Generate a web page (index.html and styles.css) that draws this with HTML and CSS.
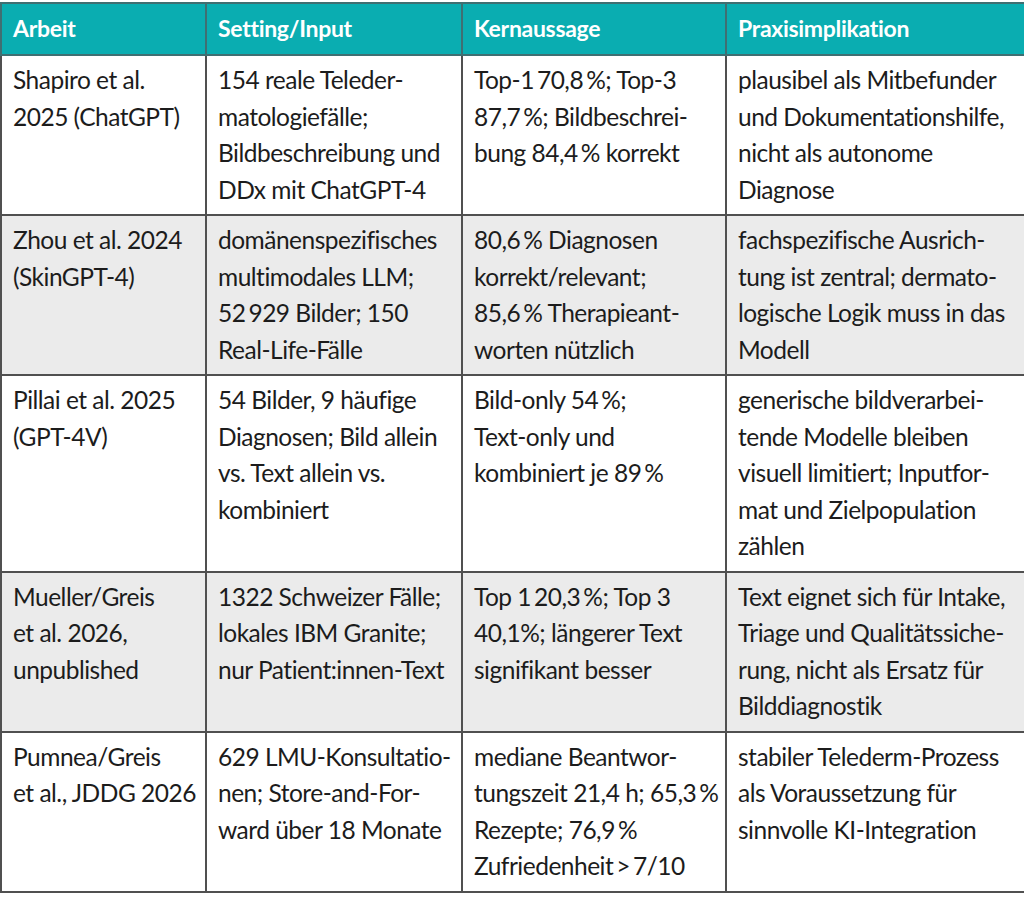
FILE: index.html
```html
<!DOCTYPE html>
<html lang="de">
<head>
<meta charset="utf-8">
<title>Studienübersicht</title>
<link rel="stylesheet" href="styles.css">
</head>
<body>
<table class="studies">
  <colgroup>
    <col class="c1"><col class="c2"><col class="c3"><col class="c4">
  </colgroup>
  <thead>
    <tr><th>Arbeit</th><th>Setting/Input</th><th>Kernaussage</th><th>Praxisimplikation</th></tr>
  </thead>
  <tbody>
    <tr>
      <td>Shapiro et al.<br>2025 (ChatGPT)</td>
      <td>154 reale Teleder-<br>matologiefälle;<br>Bildbeschreibung und<br>DDx mit ChatGPT-4</td>
      <td>Top-1<span class="ts"></span>70,8<span class="ts"></span>%; Top-3<br>87,7<span class="ts"></span>%; Bildbeschrei-<br>bung 84,4<span class="ts"></span>% korrekt</td>
      <td>plausibel als Mitbefunder<br>und Dokumentationshilfe,<br>nicht als autonome<br>Diagnose</td>
    </tr>
    <tr class="alt">
      <td>Zhou et al. 2024<br>(SkinGPT-4)</td>
      <td>domänenspezifisches<br>multimodales LLM;<br>52<span class="ts"></span>929 Bilder; 150<br>Real-Life-Fälle</td>
      <td>80,6<span class="ts"></span>% Diagnosen<br>korrekt/relevant;<br>85,6<span class="ts"></span>% Therapieant-<br>worten nützlich</td>
      <td>fachspezifische Ausrich-<br>tung ist zentral; dermato-<br>logische Logik muss in das<br>Modell</td>
    </tr>
    <tr>
      <td>Pillai et al. 2025<br>(GPT-4V)</td>
      <td>54 Bilder, 9 häufige<br>Diagnosen; Bild allein<br>vs. Text allein vs.<br>kombiniert</td>
      <td>Bild-only 54<span class="ts"></span>%;<br>Text-only und<br>kombiniert je 89<span class="ts"></span>%</td>
      <td>generische bildverarbei-<br>tende Modelle bleiben<br>visuell limitiert; Inputfor-<br>mat und Zielpopulation<br>zählen</td>
    </tr>
    <tr class="alt">
      <td>Mueller/Greis<br>et al. 2026,<br>unpublished</td>
      <td>1322 Schweizer Fälle;<br>lokales IBM Granite;<br>nur Patient:innen-Text</td>
      <td>Top 1<span class="ts"></span>20,3<span class="ts"></span>%; Top 3<br>40,1%; längerer Text<br>signifikant besser</td>
      <td>Text eignet sich für Intake,<br>Triage und Qualitätssiche-<br>rung, nicht als Ersatz für<br>Bilddiagnostik</td>
    </tr>
    <tr>
      <td>Pumnea/Greis<br>et al., JDDG 2026</td>
      <td>629 LMU-Konsultatio-<br>nen; Store-and-For-<br>ward über 18 Monate</td>
      <td>mediane Beantwor-<br>tungszeit 21,4 h; 65,3<span class="ts"></span>%<br>Rezepte; 76,9<span class="ts"></span>%<br>Zufriedenheit<span class="ts"></span>&gt;<span class="ts"></span>7/10</td>
      <td>stabiler Telederm-Prozess<br>als Voraussetzung für<br>sinnvolle KI-Integration</td>
    </tr>
  </tbody>
</table>
</body>
</html>
```

FILE: styles.css
```css
html, body {
  margin: 0;
  padding: 0;
  background: #ffffff;
}
body {
  padding-top: 2px;
  font-family: Lato, "Liberation Sans", sans-serif;
  color: #1c1c1c;
}
.studies {
  width: 1024px;
  border-collapse: collapse;
  table-layout: fixed;
}
.c1 { width: 205px; }
.c2 { width: 256px; }
.c3 { width: 264px; }
.c4 { width: 299px; }
.studies th,
.studies td {
  border: 2px solid #505050;
  text-align: left;
  vertical-align: top;
  white-space: nowrap;
  padding: 6px 6px 6px 11px;
}
.studies th {
  background: #0aadb1;
  color: #ffffff;
  font-weight: 700;
  font-size: 23px;
  letter-spacing: -0.3px;
  line-height: 36px;
  padding-top: 6px;
  padding-bottom: 8px;
  border-color: #3f6f72;
}
.studies td {
  font-size: 24.5px;
  letter-spacing: -0.5px;
  line-height: 36.5px;
}
.studies tr.alt td {
  background: #ebebeb;
}
.ts {
  display: inline-block;
  width: 3px;
}
```
